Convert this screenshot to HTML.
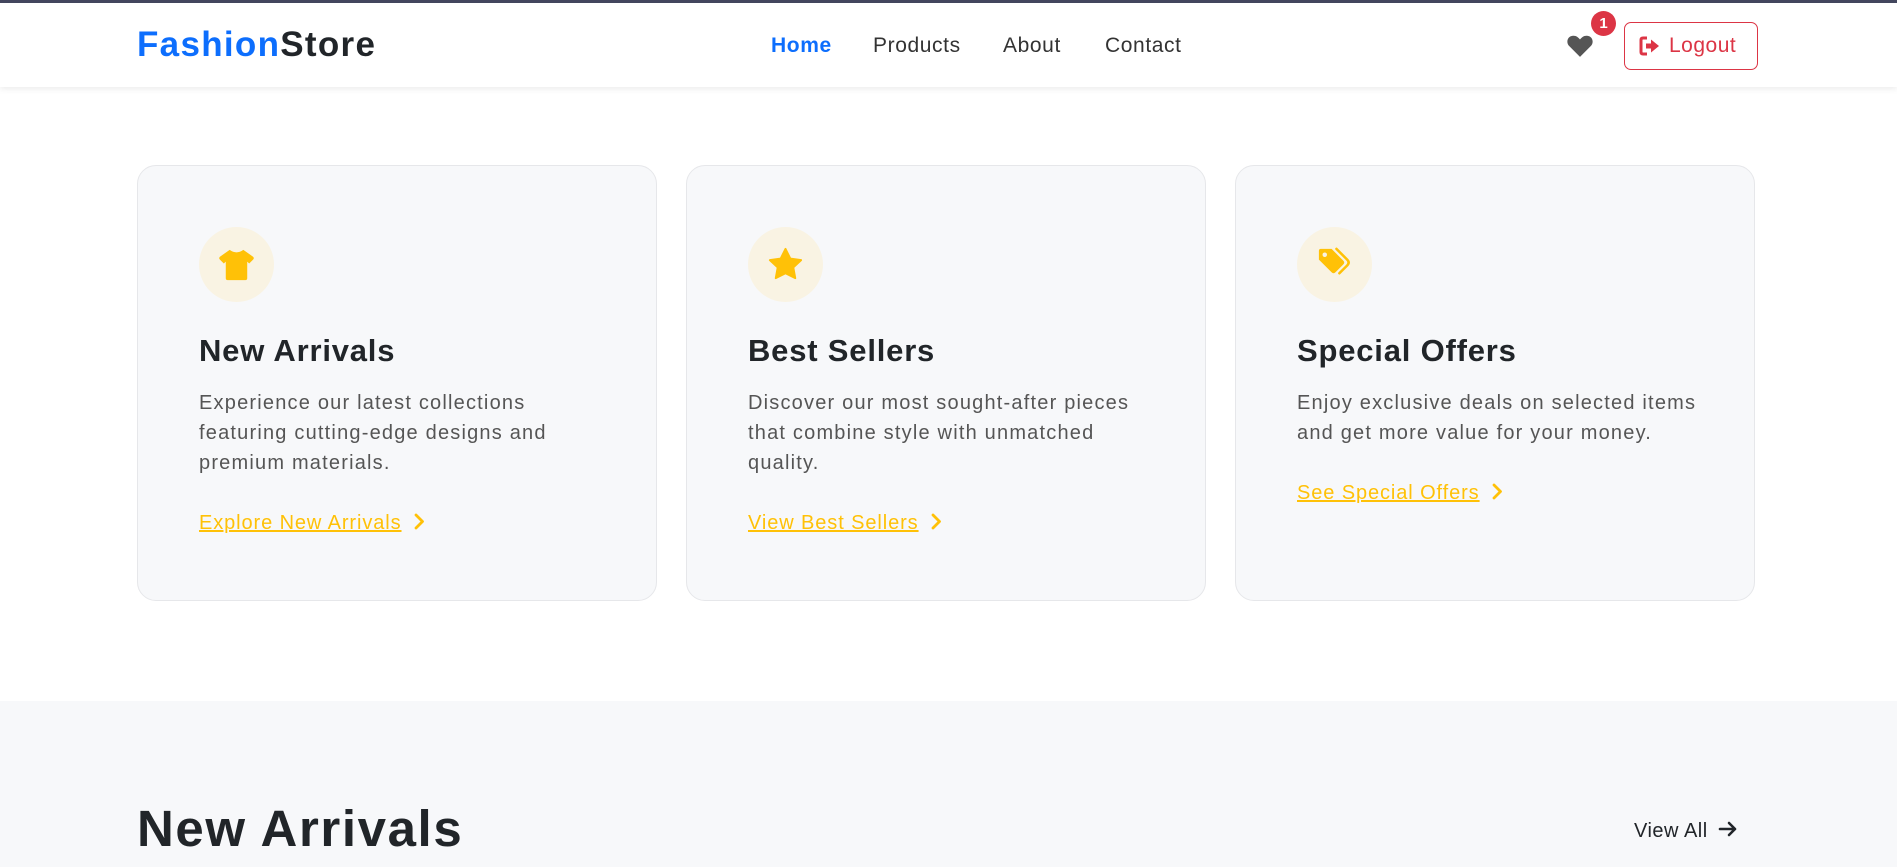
<!DOCTYPE html>
<html><head><meta charset="utf-8">
<style>
*{box-sizing:border-box;margin:0;padding:0}
html,body{width:1897px;height:867px;overflow:hidden;background:#fff;font-family:"Liberation Sans",Arial,sans-serif;color:#212529}
.topbar{position:absolute;left:0;top:0;width:1897px;height:3px;background:#44475f}
nav{position:absolute;left:0;top:3px;width:1897px;height:84px;background:#fff;box-shadow:0 2px 6px rgba(0,0,0,.08);z-index:2}
.logo{position:absolute;left:137px;top:22px;font-size:35px;font-weight:bold;letter-spacing:1.3px}
.logo .a{color:#0d6efd}
.links a{position:absolute;top:31px;font-size:21px;color:#333;text-decoration:none;letter-spacing:.6px}
.heart{position:absolute;left:1567px;top:31px}
.badge{position:absolute;left:1591px;top:8px;width:25px;height:25px;border-radius:50%;background:#dc3545;color:#fff;font-size:15px;font-weight:bold;text-align:center;line-height:25px}
.logout{position:absolute;left:1624px;top:19px;width:134px;height:48px;border:1.5px solid #dc3545;border-radius:7px;color:#dc3545;font-size:21px;line-height:45px;padding-left:44px;letter-spacing:.5px}
.logout svg{position:absolute;left:14px;top:13px}
.card{position:absolute;top:165px;width:520px;height:436px;background:#f7f8fa;border:1px solid #e6e7ea;border-radius:19px;padding:61px 0 0 61px}
.ic{width:75px;height:75px;border-radius:50%;background:#f9f3e3;position:relative}
.ic svg{position:absolute;left:18px;top:18px}
.card h3{margin-top:31px;font-size:31px;font-weight:bold;color:#212529;letter-spacing:.8px}
.card p{margin-top:19px;font-size:20px;line-height:30px;color:#555;white-space:nowrap;letter-spacing:1.2px}
.card a{display:inline-block;margin-top:34px;font-size:20px;color:#ffc107;text-decoration:underline;letter-spacing:.9px}
.card a svg{margin-left:12px;vertical-align:-1px}
.sec{position:absolute;left:0;top:701px;width:1897px;height:166px;background:#f7f8fa}
.sec h2{position:absolute;left:137px;top:98px;font-size:51px;font-weight:bold;color:#212529;letter-spacing:1.6px}
.sec .va{position:absolute;left:1634px;top:119px;font-size:20px;color:#212529;letter-spacing:.5px}
.sec .va svg{margin-left:10px;vertical-align:-1px}
</style></head><body>
<div class="topbar"></div>
<nav>
<div class="logo"><span class="a">Fashion</span>Store</div>
<div class="links">
<a style="left:771px;color:#0d6efd;font-weight:bold">Home</a>
<a style="left:873px">Products</a>
<a style="left:1003px">About</a>
<a style="left:1105px">Contact</a>
</div>
<svg class="heart" width="26" height="23" viewBox="0 0 24 21"><path d="M12 21 L2 11 C-1 8 0 2 5.5 1.5 C8.5 1.3 10.5 3 12 5 C13.5 3 15.5 1.3 18.5 1.5 C24 2 25 8 22 11 Z" fill="#555"/></svg>
<div class="badge">1</div>
<div class="logout"><svg width="22" height="20" viewBox="0 0 22 20"><path d="M8 2H4Q2 2 2 4V16Q2 18 4 18H8" stroke="#dc3545" stroke-width="3" fill="none"/><path d="M7 7.5H12V3.5L20 10L12 16.5V12.5H7Z" fill="#dc3545"/></svg>Logout</div>
</nav>

<div class="card" style="left:137px">
<div class="ic"><svg width="39" height="39" viewBox="0 0 40 40"><path d="M13 5 Q20 10 27 5 L37 12 Q38.5 13.5 37 15 L33 19 L31 17 V34 Q31 36 29 36 H11 Q9 36 9 34 V17 L7 19 L3 15 Q1.5 13.5 3 12 Z" fill="#ffc107"/></svg></div>
<h3>New Arrivals</h3>
<p>Experience our latest collections<br>featuring cutting-edge designs and<br>premium materials.</p>
<a>Explore New Arrivals<svg width="11" height="17" viewBox="0 0 11 17"><path d="M2 2 L8.5 8.5 L2 15" stroke="#ffc107" stroke-width="2.8" fill="none" stroke-linecap="round" stroke-linejoin="round"/></svg></a>
</div>
<div class="card" style="left:686px">
<div class="ic"><svg width="39" height="39" viewBox="0 0 40 40"><path d="M20 4 L25 14 L36 15.5 L28 23 L30 34 L20 29 L10 34 L12 23 L4 15.5 L15 14 Z" fill="#ffc107" stroke="#ffc107" stroke-width="2" stroke-linejoin="round"/></svg></div>
<h3>Best Sellers</h3>
<p>Discover our most sought-after pieces<br>that combine style with unmatched<br>quality.</p>
<a>View Best Sellers<svg width="11" height="17" viewBox="0 0 11 17"><path d="M2 2 L8.5 8.5 L2 15" stroke="#ffc107" stroke-width="2.8" fill="none" stroke-linecap="round" stroke-linejoin="round"/></svg></a>
</div>
<div class="card" style="left:1235px">
<div class="ic"><svg width="39" height="39" viewBox="0 0 40 40"><path d="M4 6 Q4 4 6 4 H17 L29 16 Q31 18 29 20 L21 28 Q19 30 17 28 L4 15 Z" fill="#ffc107"/><circle cx="10" cy="10" r="2.3" fill="#f9f3e3"/><path d="M22 4 L33 15 Q36 18 33 21 L25 29" stroke="#ffc107" stroke-width="2.6" fill="none" stroke-linecap="round"/></svg></div>
<h3>Special Offers</h3>
<p>Enjoy exclusive deals on selected items<br>and get more value for your money.</p>
<a>See Special Offers<svg width="11" height="17" viewBox="0 0 11 17"><path d="M2 2 L8.5 8.5 L2 15" stroke="#ffc107" stroke-width="2.8" fill="none" stroke-linecap="round" stroke-linejoin="round"/></svg></a>
</div>

<div class="sec">
<h2>New Arrivals</h2>
<div class="va">View All<svg width="20" height="18" viewBox="0 0 20 18"><path d="M2 9 H17 M11 3 L17 9 L11 15" stroke="#212529" stroke-width="2.6" fill="none" stroke-linecap="round" stroke-linejoin="round"/></svg></div>
</div>
</body></html>
